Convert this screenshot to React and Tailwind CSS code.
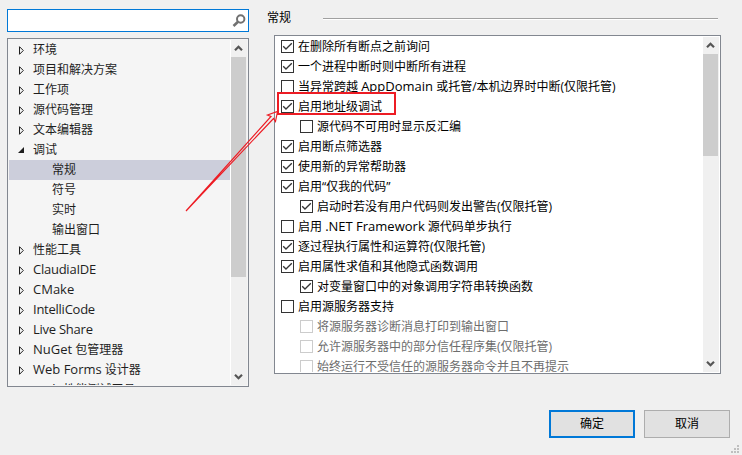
import React from 'react';

const treeItems = [
    { label: '环境' },
    { label: '项目和解决方案' },
    { label: '工作项' },
    { label: '源代码管理' },
    { label: '文本编辑器' },
    { label: '调试', open: true },
    { label: '常规', child: true, selected: true },
    { label: '符号', child: true },
    { label: '实时', child: true },
    { label: '输出窗口', child: true },
    { label: '性能工具' },
    { label: 'ClaudiaIDE', tight: true },
    { label: 'CMake' },
    { label: 'IntelliCode', tight: true },
    { label: 'Live Share', tight: true },
    { label: 'NuGet 包管理器' },
    { label: 'Web Forms 设计器' },
    { label: 'Web 性能测试工具' },
];

const options = [
    { label: '在删除所有断点之前询问', checked: true },
    { label: '一个进程中断时则中断所有进程', checked: true },
    { label: '当异常跨越 AppDomain 或托管/本机边界时中断(仅限托管)' },
    { label: '启用地址级调试', checked: true },
    { label: '源代码不可用时显示反汇编', child: true },
    { label: '启用断点筛选器', checked: true },
    { label: '使用新的异常帮助器', checked: true },
    { label: '启用“仅我的代码”', checked: true },
    { label: '启动时若没有用户代码则发出警告(仅限托管)', checked: true, child: true },
    { label: '启用 .NET Framework 源代码单步执行' },
    { label: '逐过程执行属性和运算符(仅限托管)', checked: true },
    { label: '启用属性求值和其他隐式函数调用', checked: true },
    { label: '对变量窗口中的对象调用字符串转换函数', checked: true, child: true },
    { label: '启用源服务器支持' },
    { label: '将源服务器诊断消息打印到输出窗口', child: true, disabled: true },
    { label: '允许源服务器中的部分信任程序集(仅限托管)', child: true, disabled: true },
    { label: '始终运行不受信任的源服务器命令并且不再提示', child: true, disabled: true },
];

// Latin runs are set slightly larger than the Chinese ones
const Label = ({ text, tight }) => (
    <span className={tight ? 'tracking-[-0.25px]' : ''}>
        {text.split(/([A-Za-z.][A-Za-z. ]*[A-Za-z])/).map((part, i) => (
            i % 2 ? <span key={i} className="text-[13px] leading-none">{part}</span> : part
        ))}
    </span>
);

const Chevron = ({ down }) => (
    <svg width="9" height="7" viewBox="0 0 9 7" className={down ? 'rotate-180' : ''}>
        <path d="M1 5.2 L4.5 1.7 L8 5.2" fill="none" stroke="#555" strokeWidth="2.2" />
    </svg>
);

const ScrollBar = ({ thumb }) => (
    <div className="flex w-4 shrink-0 flex-col bg-[#f0f0f0]">
        <div className="flex h-[17px] shrink-0 items-center justify-center pr-px">
            <Chevron />
        </div>
        <div className={`w-[15px] bg-[#cdcdcd] ${thumb}`}></div>
        <div className="mt-auto flex h-[17px] shrink-0 items-center justify-center pr-px">
            <Chevron down />
        </div>
    </div>
);

const TreeRow = ({ item }) => (
    <div className={`flex h-5 shrink-0 items-center ${item.selected ? 'bg-[#cccedb]' : ''} ${item.child ? 'pl-[43px]' : 'pl-[9px]'}`}>
        {!item.child && (
            <svg width="15" height="12" viewBox="0 0 15 12" className="shrink-0">
                {item.open
                    ? <path d="M6 3 V9 H0 Z" fill="#1e1e1e" />
                    : <path d="M1.5 2.7 V10.3 L5.3 6.5 Z" fill="none" stroke="#1e1e1e" />}
            </svg>
        )}
        <Label text={item.label} tight={item.tight} />
    </div>
);

const OptionRow = ({ item }) => (
    <div className={`flex h-5 shrink-0 items-start gap-1 ${item.child ? 'pl-6' : 'pl-[5px]'} ${item.disabled ? 'text-[#6d6d6d]' : ''}`}>
        <div className={`mt-1 h-[13px] w-[13px] shrink-0 border bg-white ${item.disabled ? 'border-[#ccc]' : 'border-[#333]'}`}>
            {item.checked && (
                <svg width="11" height="11" viewBox="0 0 11 11">
                    <path d="M1.2 5.2 L4 8 L9.8 2.2" fill="none" stroke="#333" strokeWidth="1.3" />
                </svg>
            )}
        </div>
        <div className="mt-px h-5">
            <Label text={item.label} />
        </div>
    </div>
);

const App = () => {
    return (
        <div className="relative h-[455px] w-[742px] overflow-hidden bg-[#f0f0f0] pl-[7px] pt-[9px] font-['Open_Sans','Noto_Sans_CJK_SC',sans-serif] text-[12px] leading-5 whitespace-pre text-black">
            <div className="flex">
                <div className="w-[242px]">
                    <div className="flex h-[23px] items-center justify-end border border-[#0078d7] bg-white pr-0.5">
                        <svg width="14" height="14" viewBox="0 0 14 14">
                            <circle cx="8.7" cy="5" r="3.7" fill="none" stroke="#717171" strokeWidth="2" />
                            <path d="M6 7.7 L1.5 12" stroke="#717171" strokeWidth="2.6" />
                        </svg>
                    </div>
                    <div className="mt-1.5 flex h-[349px] border border-[#828790] bg-[#f5f5f5] p-px text-[#1e1e1e]">
                        <div className="flex w-[221px] flex-col overflow-hidden">
                            {treeItems.map((item) => <TreeRow key={item.label} item={item} />)}
                        </div>
                        <div className="w-px bg-white"></div>
                        <ScrollBar thumb="h-[220px]" />
                    </div>
                </div>

                <div className="ml-[18px] w-[454px]">
                    <div className="flex h-[26px] items-start">
                        <span className="-mt-px">常规</span>
                        <div className="ml-8 mr-[3px] mt-[9px] h-0.5 flex-1 border-b border-white bg-[#a0a0a0]"></div>
                    </div>
                    <div className="ml-[7px] flex h-[339px] border border-[#828790] bg-white p-px">
                        <div className="-mt-px flex flex-1 flex-col overflow-hidden">
                            {options.map((item) => <OptionRow key={item.label} item={item} />)}
                        </div>
                        <ScrollBar thumb="h-[102px]" />
                    </div>
                </div>
            </div>

            <div className="ml-[542px] mt-[23px] flex gap-[9px]">
                <button className="h-7 w-[86px] border-2 border-[#0078d7] bg-[#e1e1e1]">确定</button>
                <button className="h-7 w-[86px] border border-[#adadad] bg-[#e1e1e1]">取消</button>
            </div>

            <svg className="absolute bottom-[2px] right-[3px]" width="8" height="8" viewBox="0 0 8 8" fill="#bfbfbf">
                <path d="M6 0h2v2h-2z M3 3h2v2h-2z M6 3h2v2h-2z M0 6h2v2h-2z M3 6h2v2h-2z M6 6h2v2h-2z" />
            </svg>

            {/* red callout around the address-level debugging option */}
            <div className="absolute left-[277px] top-[92px] h-[23px] w-[119px] border-2 border-[#ed1c24]"></div>
            <svg className="absolute left-[180px] top-[105px]" width="104" height="112" viewBox="180 105 104 112">
                <path d="M186 211 L271 116.5 L267.5 115 L277.5 111.5 L275.5 121.5 L273.5 118.5 Z" fill="none" stroke="#ed1c24" strokeWidth="1.2" />
            </svg>
        </div>
    );
};

export default App;
